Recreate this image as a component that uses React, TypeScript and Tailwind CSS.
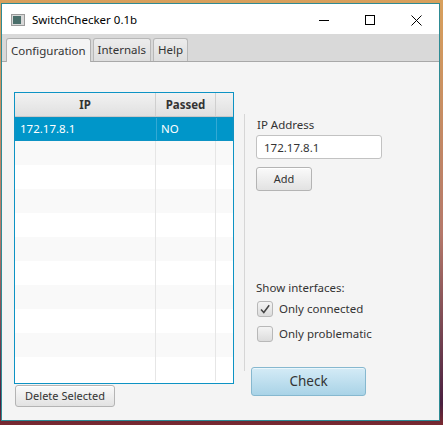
import React from "react";

const font = { fontFamily: '"Noto Sans", "Open Sans", sans-serif' };

function Btn({ children, className = "" }: { children: React.ReactNode; className?: string }) {
  return (
    <div
      className={
        "flex items-center justify-center rounded-[3px] border border-[#b4b4b4] bg-[linear-gradient(180deg,#fafafa,#e2e2e2)] text-[11px] text-[#333] shadow-[inset_0_1px_0_#fff] " +
        className
      }
    >
      {children}
    </div>
  );
}

function CheckBox({ checked, label }: { checked: boolean; label: string }) {
  return (
    <div className="flex h-[16px] items-center gap-[6px]">
      <div className="flex h-[16px] w-[16px] items-center justify-center rounded-[3px] border border-[#b8b8b8] bg-[linear-gradient(180deg,#f4f4f4,#dcdcdc)]">
        {checked && (
          <svg width="12" height="12" viewBox="0 0 12 12">
            <path d="M2 6.5 L4.8 9.5 L10.2 2.2" fill="none" stroke="#444" strokeWidth="1.5" />
          </svg>
        )}
      </div>
      <span className="text-[11.5px] leading-[16px] text-[#333]">{label}</span>
    </div>
  );
}

export default function App() {
  const rows = Array.from({ length: 11 });
  return (
    <div
      style={font}
      className="h-[425px] w-[443px] overflow-hidden bg-[linear-gradient(180deg,#d8a05c_0%,#b5786a_55%,#4a2040_95%,#7a2a30_100%)] pl-[1px] pt-[3px]"
    >
      <div className="flex h-[418px] w-[439px] flex-col border border-[#2e8b94] bg-[#f4f4f4]">
        {/* title bar */}
        <div className="flex h-[30px] items-center bg-white">
          <div className="ml-[9px] mt-[2px] flex h-[12px] w-[14px] items-center border border-[#9a9a9a] bg-[#d8d8d8] pl-[1px]">
            <div className="h-[8px] w-[8px] bg-[#4a6e6a]" />
          </div>
          <span className="ml-[7px] mt-[2px] text-[11.5px] text-black">SwitchChecker 0.1b</span>
          <div className="ml-auto flex items-center">
            <div className="flex h-[30px] w-[46px] items-center justify-center">
              <div className="mt-[2px] h-[1px] w-[10px] bg-black" />
            </div>
            <div className="flex h-[30px] w-[46px] items-center justify-center">
              <div className="mt-[2px] h-[10px] w-[10px] border border-black" />
            </div>
            <div className="flex h-[30px] w-[46px] items-center justify-center">
              <svg width="11" height="11" viewBox="0 0 11 11" className="mt-[2px]">
                <path d="M0.5 0.5 L10.5 10.5 M10.5 0.5 L0.5 10.5" stroke="#000" strokeWidth="1" />
              </svg>
            </div>
          </div>
        </div>
        {/* tab header */}
        <div className="flex h-[28px] items-end gap-[2px] border-b border-[#a8a8a8] bg-[#d9d9d9] pl-[4px]">
          <div className="-mb-[1px] flex h-[24px] items-center rounded-t-[3px] border border-b-0 border-[#b0b0b0] bg-[#f4f4f4] px-[4px] text-[11.5px] text-[#333]">
            Configuration
          </div>
          <div className="flex h-[23px] items-center rounded-t-[3px] border border-b-0 border-[#b8b8b8] bg-[linear-gradient(180deg,#ececec,#dedede)] px-[4px] text-[11.5px] text-[#333]">
            Internals
          </div>
          <div className="flex h-[23px] items-center rounded-t-[3px] border border-b-0 border-[#b8b8b8] bg-[linear-gradient(180deg,#ececec,#dedede)] px-[4px] text-[11.5px] text-[#333]">
            Help
          </div>
        </div>
        {/* content */}
        <div className="flex flex-1 pl-[12px] pt-[30px]">
          <div className="flex flex-col">
            <div className="flex h-[292px] w-[220px] flex-col overflow-hidden border border-[#0d93c4] bg-white">
              <div className="flex h-[24px] shrink-0 border-b border-[#c8c8c8] bg-[linear-gradient(180deg,#f2f2f2,#e0e0e0)] text-[11.5px] font-bold text-[#333]">
                <div className="flex w-[141px] items-center justify-center border-r border-[#cfcfcf]">IP</div>
                <div className="flex w-[60px] items-center justify-center border-r border-[#cfcfcf]">Passed</div>
                <div className="flex-1" />
              </div>
              {rows.map((_, i) => (
                <div
                  key={i}
                  className={
                    "flex h-[24px] shrink-0 text-[11.5px] " +
                    (i === 0
                      ? "border border-[#0d93c4] bg-[#0096c9] text-white"
                      : i % 2 === 1
                      ? "bg-[#f9f9f9]"
                      : "bg-white")
                  }
                >
                  <div className={"flex w-[141px] items-center border-r pl-[4px] " + (i === 0 ? "border-[#33a9d4]" : "border-[#e6e6e6]")}>
                    {i === 0 ? "172.17.8.1" : ""}
                  </div>
                  <div className={"flex w-[60px] items-center border-r pl-[4px] " + (i === 0 ? "border-[#33a9d4]" : "border-[#e6e6e6]")}>
                    {i === 0 ? "NO" : ""}
                  </div>
                  <div className="flex-1" />
                </div>
              ))}
            </div>
            <Btn className="ml-[1px] mt-[1px] h-[22px] w-[100px] text-[11.5px]">Delete Selected</Btn>
          </div>
          <div className="ml-[10px] mt-[22px] h-[257px] w-[1px] bg-[#d6d6d6]" />
          <div className="ml-[6px] flex flex-1 flex-col">
            <div className="ml-[6px] mt-[24px] text-[11.5px] text-[#333]">IP Address</div>
            <div className="ml-[5px] mt-[2px] flex h-[24px] w-[126px] items-center rounded-[3px] border border-[#c2c2c2] bg-white pl-[7px] text-[11.5px] text-[#333]">
              172.17.8.1
            </div>
            <Btn className="ml-[5px] mt-[8px] h-[24px] w-[56px] text-[11.5px]">Add</Btn>
            <div className="ml-[5px] mt-[88px] text-[11.5px] text-[#333]">Show interfaces:</div>
            <div className="ml-[6px] mt-[4px]">
              <CheckBox checked label="Only connected" />
            </div>
            <div className="ml-[6px] mt-[9px]">
              <CheckBox checked={false} label="Only problematic" />
            </div>
            <div className="mt-[25px] flex h-[29px] w-[115px] items-center justify-center rounded-[3px] border border-[#86b8cf] bg-[linear-gradient(180deg,#d4ebf6,#a9d3e7)] text-[13.5px] text-[#333] shadow-[inset_0_1px_0_#eaf6fc]">
              Check
            </div>
          </div>
        </div>
      </div>
    </div>
  );
}
